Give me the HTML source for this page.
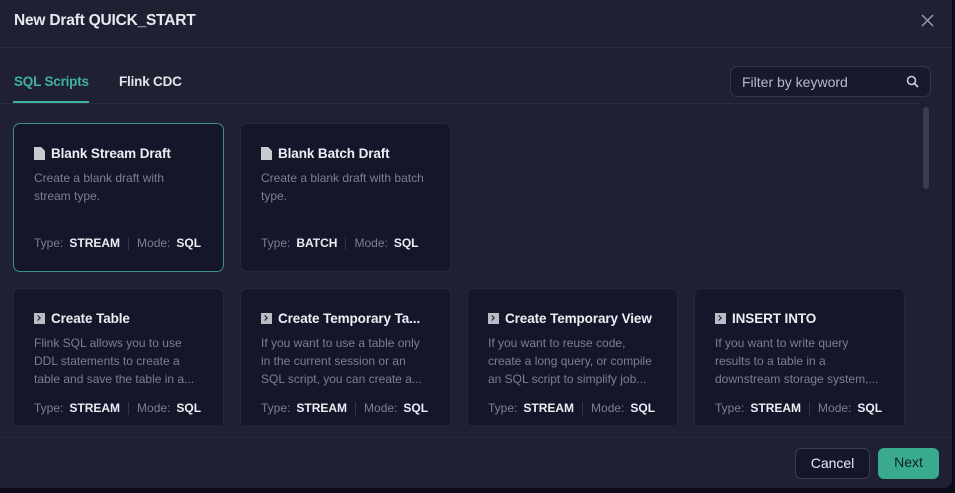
<!DOCTYPE html>
<html><head><style>
*{box-sizing:border-box;margin:0;padding:0}
body{width:955px;height:493px;background:#0b0c17;font-family:"Liberation Sans",sans-serif;position:relative;overflow:hidden}
.dlg{position:absolute;left:0;top:0;width:952px;height:488px;background:#1f2133;border-radius:0 0 8px 0}
.title{position:absolute;left:14px;top:12px;color:#e8e9ef;font-size:15.5px;font-weight:bold;letter-spacing:-.2px}
.close{position:absolute;left:920px;top:13px}
.hr{position:absolute;left:0;height:1px;background:#2a2d40}
.tab{position:absolute;top:74px;font-size:13.5px;font-weight:bold;letter-spacing:-.2px}
.search{position:absolute;left:730px;top:66px;width:201px;height:31px;border:1px solid #33364a;border-radius:7px;background:#171a2d;color:#b8bac5;font-size:14px;padding:7px 11px}
.scroll{position:absolute;left:923px;top:107px;width:6px;height:82px;background:#3a3d52;border-radius:3px}
.area{position:absolute;left:0;top:104px;width:920px;height:321px;overflow:hidden}
.card{position:absolute;width:211px;background:#15162a;border:1px solid #25283b;border-radius:7px;padding:0 20px}
.card.sel{border-color:#3e8e8c}
.ct{color:#eceef3;font-size:13.5px;font-weight:bold;margin-top:22px;white-space:nowrap;overflow:hidden;display:flex;align-items:center;letter-spacing:-.1px}
.ic{display:inline-block;width:11px;height:13px;background:#c9cbd3;margin-right:6px;flex:none;clip-path:polygon(0 0,65% 0,100% 30%,100% 100%,0 100%)}
.ic2{display:inline-block;width:11px;height:11px;background:#b9bbc5;margin-right:6px;flex:none;position:relative}
.ic2:after{content:"";position:absolute;left:2px;top:3px;width:3px;height:3px;border-right:1px solid #15162a;border-bottom:1px solid #15162a;transform:rotate(-45deg)}
.d{color:#7c7f90;font-size:12px;line-height:18px;margin-top:8px}
.m{position:absolute;left:20px;font-size:12px;color:#7c7f90;white-space:nowrap}
.m b{color:#eceef3;margin:0 4px 0 6px}
.m i{display:inline-block;width:1px;height:13px;background:#33364a;vertical-align:middle;margin:0 8px 0 4px}
.btn{position:absolute;top:448px;height:31px;border-radius:6px;font-size:14px;text-align:center;line-height:29px}
</style></head><body>
<div class="dlg">
<div class="title">New Draft QUICK_START</div>
<svg class="close" width="15" height="15" viewBox="0 0 15 15"><path d="M2 2L13 13M13 2L2 13" stroke="#9a9cab" stroke-width="1.5"/></svg>
<div class="hr" style="top:47px;width:952px"></div>
<div class="tab" style="left:14px;color:#3fb39b">SQL Scripts</div>
<div class="tab" style="left:119px;color:#e3e4ea">Flink CDC</div>
<div class="hr" style="top:103px;width:920px"></div>
<div style="position:absolute;left:13px;top:101px;width:76px;height:2px;background:#3fb39b"></div>
<div class="search">Filter by keyword
<svg style="position:absolute;right:11px;top:8px" width="13" height="13" viewBox="0 0 13 13"><circle cx="5.5" cy="5.5" r="4" stroke="#d0d2da" stroke-width="1.5" fill="none"/><path d="M8.5 8.5L12 12" stroke="#d0d2da" stroke-width="1.6"/></svg></div>
<div class="scroll"></div>
<div class="area">
 <div class="card sel" style="left:13px;top:19px;height:149px"><div class="ct"><span class="ic"></span>Blank Stream Draft</div><div class="d">Create a blank draft with stream type.</div><div class="m" style="top:112px">Type:<b>STREAM</b><i></i>Mode:<b>SQL</b></div></div>
 <div class="card" style="left:240px;top:19px;height:149px"><div class="ct"><span class="ic"></span>Blank Batch Draft</div><div class="d">Create a blank draft with batch type.</div><div class="m" style="top:112px">Type:<b>BATCH</b><i></i>Mode:<b>SQL</b></div></div>
 <div class="card" style="left:13px;top:184px;height:160px"><div class="ct"><span class="ic2"></span>Create Table</div><div class="d">Flink SQL allows you to use DDL statements to create a table and save the table in a...</div><div class="m" style="top:112px">Type:<b>STREAM</b><i></i>Mode:<b>SQL</b></div></div>
 <div class="card" style="left:240px;top:184px;height:160px"><div class="ct"><span class="ic2"></span>Create Temporary Ta...</div><div class="d">If you want to use a table only in the current session or an SQL script, you can create a...</div><div class="m" style="top:112px">Type:<b>STREAM</b><i></i>Mode:<b>SQL</b></div></div>
 <div class="card" style="left:467px;top:184px;height:160px"><div class="ct"><span class="ic2"></span>Create Temporary View</div><div class="d">If you want to reuse code, create a long query, or compile an SQL script to simplify job...</div><div class="m" style="top:112px">Type:<b>STREAM</b><i></i>Mode:<b>SQL</b></div></div>
 <div class="card" style="left:694px;top:184px;height:160px"><div class="ct"><span class="ic2"></span>INSERT INTO</div><div class="d">If you want to write query results to a table in a downstream storage system,...</div><div class="m" style="top:112px">Type:<b>STREAM</b><i></i>Mode:<b>SQL</b></div></div>
</div>
<div class="hr" style="top:437px;width:952px;background:#262939"></div>
<div class="btn" style="left:795px;width:75px;background:#15162a;border:1px solid #3a3d50;color:#e8e9ef">Cancel</div>
<div class="btn" style="left:878px;width:61px;background:#3aaa8f;color:#10211e">Next</div>
</div>
</body></html>
